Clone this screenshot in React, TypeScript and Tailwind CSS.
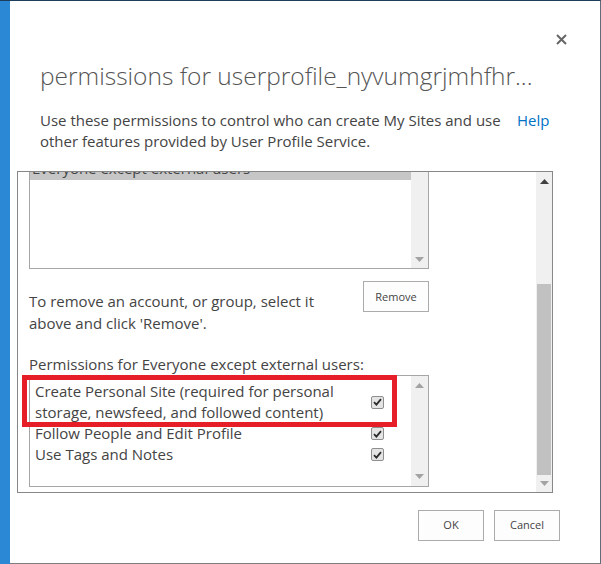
import React from "react";

const font = { fontFamily: '"Open Sans", "Noto Sans", sans-serif' };

function Check() {
  return (
    <div className="w-[13px] h-[13px] border border-[#8e8e8e] rounded-[2px] bg-[#e4e4e4] flex items-center justify-center">
      <svg width="9" height="8" viewBox="0 0 9 8">
        <path d="M1 4.2 L3.4 6.6 L8 1.2" fill="none" stroke="#2b2b2b" strokeWidth="1.8" />
      </svg>
    </div>
  );
}

function TriUp({ color }: { color: string }) {
  return (
    <svg width="9" height="5" viewBox="0 0 9 5">
      <path d="M0 5 L4.5 0 L9 5 Z" fill={color} />
    </svg>
  );
}
function TriDown({ color }: { color: string }) {
  return (
    <svg width="9" height="5" viewBox="0 0 9 5">
      <path d="M0 0 L4.5 5 L9 0 Z" fill={color} />
    </svg>
  );
}

export default function App() {
  return (
    <div className="relative w-[601px] h-[564px] flex bg-white overflow-hidden" style={font}>
      <div className="w-[10px] h-full bg-[#2a88d5] border-t border-[#1e3d5c]" />
      <div className="flex-1 h-full border-t border-t-[#1e3d5c] border-r border-r-[#5f6b76] border-b border-b-[#7d7d7d] flex flex-col text-[#444]">
        {/* close */}
        <div className="flex justify-end pt-[33px] pr-[33px] h-[46px]">
          <svg width="11" height="11" viewBox="0 0 11 11">
            <path d="M1 1 L10 10 M10 1 L1 10" stroke="#666" strokeWidth="2" />
          </svg>
        </div>
        {/* title */}
        <div className="pl-[30px] mt-[13px] text-[24.5px] leading-[32px] font-light text-[#555] whitespace-nowrap">
          permissions for userprofile_nyvumgrjmhfhr...
        </div>
        {/* description */}
        <div className="pl-[30px] mt-[18px] flex text-[15px] leading-[21px]">
          <div className="w-[477px]">
            Use these permissions to control who can create My Sites and use other features provided by User Profile Service.
          </div>
          <div className="text-[#0072c6]">Help</div>
        </div>
        {/* scroll box */}
        <div className="ml-[7px] mt-[19px] w-[536px] h-[322px] border border-[#878787] flex">
          <div className="flex-1 overflow-hidden">
            <div className="-mt-[14px] pl-[11px] text-[15px] leading-[21px]">
              {/* list 1 */}
              <div className="w-[400px] h-[111px] border border-[#a6a6a6] flex">
                <div className="flex-1">
                  <div className="h-[21px] bg-[#c6c6c6] pl-[2px] leading-[19px]">Everyone except external users</div>
                </div>
                <div className="w-[17px] bg-[#f0f0f0] flex flex-col justify-between items-center py-[6px]">
                  <TriUp color="#a3a3a3" />
                  <TriDown color="#a3a3a3" />
                </div>
              </div>
              {/* remove row */}
              <div className="w-[400px] mt-[12px] flex justify-between items-start">
                <div className="mt-[9px] leading-[22px]">
                  To remove an account, or group, select it
                  <br />
                  above and click 'Remove'.
                </div>
                <button className="w-[66px] h-[31px] border border-[#ababab] bg-[#fdfdfd] text-[11px] text-[#444]">
                  Remove
                </button>
              </div>
              <div className="mt-[19px] leading-[22px]">Permissions for Everyone except external users:</div>
              {/* list 2 */}
              <div className="w-[400px] h-[112px] border border-[#a6a6a6] flex">
                <div className="flex-1 pt-[5px] pl-[5px]">
                  <div className="flex items-center">
                    <div className="w-[336px]">Create Personal Site (required for personal storage, newsfeed, and followed content)</div>
                    <Check />
                  </div>
                  <div className="flex items-center">
                    <div className="w-[336px]">Follow People and Edit Profile</div>
                    <Check />
                  </div>
                  <div className="flex items-center">
                    <div className="w-[336px]">Use Tags and Notes</div>
                    <Check />
                  </div>
                </div>
                <div className="w-[17px] bg-[#f0f0f0] flex flex-col justify-between items-center py-[7px]">
                  <TriUp color="#a3a3a3" />
                  <TriDown color="#a3a3a3" />
                </div>
              </div>
            </div>
          </div>
          {/* outer scrollbar */}
          <div className="w-[16px] bg-[#f0f0f0] flex flex-col items-center pt-[7px] pb-[6px]">
            <TriUp color="#404040" />
            <div className="flex-1" />
            <div className="w-[14px] h-[191px] bg-[#c1c1c1]" />
            <div className="mt-[6px]">
              <TriDown color="#a3a3a3" />
            </div>
          </div>
        </div>
        {/* buttons */}
        <div className="mt-[17px] flex justify-end gap-[10px] pr-[40px]">
          <button className="w-[66px] h-[31px] border border-[#ababab] bg-[#fdfdfd] text-[11px] text-[#444]">OK</button>
          <button className="w-[66px] h-[31px] border border-[#ababab] bg-[#fdfdfd] text-[11px] text-[#444]">Cancel</button>
        </div>
      </div>
      {/* red highlight overlay */}
      <div className="absolute left-[22px] top-[375px] w-[375px] h-[52px] border-[5px] border-[#e61e28] pointer-events-none" />
    </div>
  );
}
